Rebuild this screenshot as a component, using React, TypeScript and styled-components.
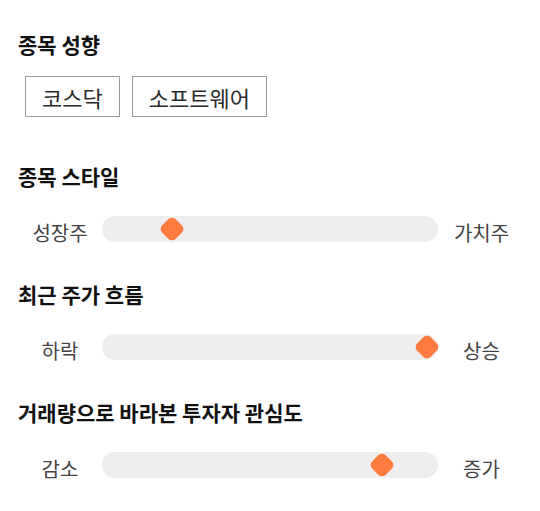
import styled, { createGlobalStyle } from 'styled-components'

const GlobalStyle = createGlobalStyle`
  body {
    margin: 0;
    background: #fff;
    font-family: 'Noto Sans CJK KR', 'Noto Sans', sans-serif;
  }
`

const Page = styled.div`
  width: 540px;
  padding: 30px 15px 0 18px;
  box-sizing: border-box;
`

const Section = styled.section`
  margin-bottom: 38px;

  &:first-child {
    margin-bottom: 45px;
  }
`

const Title = styled.h2`
  margin: 0;
  font-size: 21px;
  line-height: 28px;
  font-weight: 700;
  color: #111;
`

const ChipRow = styled.div`
  display: flex;
  gap: 12px;
  margin-top: 18px;
  padding-left: 7px;
`

const Chip = styled.button`
  height: 41px;
  padding: 0 16px;
  border: 1px solid #9a9a9a;
  background: #fff;
  font-family: inherit;
  font-size: 22px;
  color: #2a2a2a;
  cursor: pointer;
`

const SliderRow = styled.div`
  display: grid;
  grid-template-columns: 84px 336px 1fr;
  grid-template-rows: 26px;
  margin-top: 26px;
`

const SideLabel = styled.span`
  align-self: start;
  text-align: center;
  font-size: 20px;
  line-height: 34px;
  color: #444;
`

const Track = styled.div`
  position: relative;
  height: 26px;
  border-radius: 13px;
  background: #eeeeee;
`

const Thumb = styled.div`
  position: absolute;
  top: 50%;
  width: 19px;
  height: 19px;
  border-radius: 5px;
  background: #ff7a3f;
  transform: translate(-50%, -50%) rotate(45deg);
`

type Slider = { title: string; left: string; right: string; value: number }

const sliders: Slider[] = [
  { title: '종목 스타일', left: '성장주', right: '가치주', value: 0.208 },
  { title: '최근 주가 흐름', left: '하락', right: '상승', value: 0.967 },
  { title: '거래량으로 바라본 투자자 관심도', left: '감소', right: '증가', value: 0.833 },
]

export default function App() {
  return (
    <Page>
      <GlobalStyle />
      <Section>
        <Title>종목 성향</Title>
        <ChipRow>
          <Chip>코스닥</Chip>
          <Chip>소프트웨어</Chip>
        </ChipRow>
      </Section>
      {sliders.map((s) => (
        <Section key={s.title}>
          <Title>{s.title}</Title>
          <SliderRow>
            <SideLabel>{s.left}</SideLabel>
            <Track>
              <Thumb style={{ left: `${s.value * 100}%` }} />
            </Track>
            <SideLabel>{s.right}</SideLabel>
          </SliderRow>
        </Section>
      ))}
    </Page>
  )
}
